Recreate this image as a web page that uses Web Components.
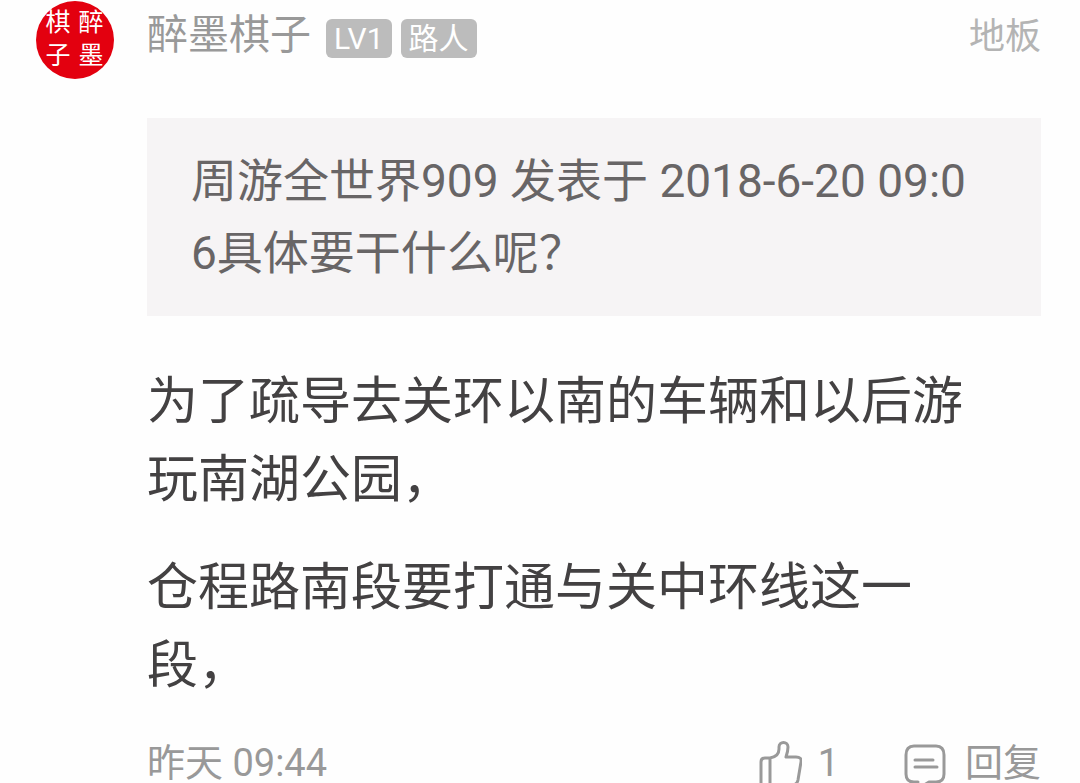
<!DOCTYPE html>
<html lang="zh-CN">
<head>
<meta charset="utf-8">
<meta name="viewport" content="width=device-width, initial-scale=1">
<title>醉墨棋子</title>
<style>
    body {
        margin: 0;
        background: #fefefe;
        font-family: Roboto, "Noto Sans CJK SC", sans-serif;
    }
</style>
</head>
<body>

<forum-post>
    <seal-avatar slot="avatar"></seal-avatar>
    <a slot="name" href="#user">醉墨棋子</a>
    <user-badge slot="badges">LV1</user-badge>
    <user-badge slot="badges">路人</user-badge>
    <span slot="floor">地板</span>
    <post-quote>周游全世界909 发表于 2018-6-20 09:06具体要干什么呢？</post-quote>
    <post-body>
        <p>为了疏导去关环以南的车辆和以后游玩南湖公园，</p>
        <p>仓程路南段要打通与关中环线这一段，</p>
    </post-body>
    <time slot="time">昨天 09:44</time>
    <post-action slot="actions" icon="like">1</post-action>
    <post-action slot="actions" icon="reply">回复</post-action>
</forum-post>

<script>
const ICONS = {
    like: `
        <path d="M14 18v28M14 18H9q-4 0-4 4v24M14 18c6-1 9-4 9-9V7c0-6 9-6 9 0 0 4-1 7-2 10h10q6 0 5 5l-3 18q-1 5-6 5H5"/>`,
    reply: `
        <path d="M15 42h-4q-8 0-8-8V15q0-9 8-9h22q8 0 8 9v19q0 8-8 8h-7l-5 3"/>
        <path d="M12 20h18M12 27h22"/>`
};


class SealAvatar extends HTMLElement {

    constructor() {
        super();
        this.attachShadow({mode: "open"});
    }

    connectedCallback() {
        this.shadowRoot.innerHTML = `
            <style>
                :host {
                    display: block;
                }

                svg {
                    display: block;
                    width: 100%;
                }

                text {
                    fill: #fff;
                    font-size: 25px;
                    text-anchor: middle;
                }
            </style>

            <svg viewBox="0 0 78 78">
                <circle cx="39" cy="39" r="39" fill="#e3000f"/>
                <text x="22" y="30">棋</text>
                <text x="22" y="63">子</text>
                <text x="55" y="30">醉</text>
                <text x="55" y="63">墨</text>
            </svg>
        `;
    }
}


class UserBadge extends HTMLElement {

    constructor() {
        super();
        this.attachShadow({mode: "open"});
    }

    connectedCallback() {
        this.shadowRoot.innerHTML = `
            <style>
                :host {
                    display: block;
                    padding: 0 8px;
                    border-radius: 6px;
                    background: #bcbcbc;
                    color: #fff;
                    font-size: 30px;
                    line-height: 39px;
                }
            </style>

            <slot></slot>
        `;
    }
}


class PostQuote extends HTMLElement {

    constructor() {
        super();
        this.attachShadow({mode: "open"});
    }

    connectedCallback() {
        this.shadowRoot.innerHTML = `
            <style>
                :host {
                    display: block;
                }

                blockquote {
                    margin: 0;
                    padding: 27px 52px 27px 44px;
                    background: #f6f4f5;
                    color: #686566;
                    font-size: 46px;
                    line-height: 72px;
                    word-break: break-all;
                }
            </style>

            <blockquote><slot></slot></blockquote>
        `;
    }
}


class PostBody extends HTMLElement {

    constructor() {
        super();
        this.attachShadow({mode: "open"});
    }

    connectedCallback() {
        this.shadowRoot.innerHTML = `
            <style>
                :host {
                    display: flex;
                    flex-direction: column;
                    gap: 30px;
                    padding-right: 44px;
                    color: #434142;
                    font-size: 51px;
                    line-height: 78px;
                }

                ::slotted(p) {
                    margin: 0;
                }
            </style>

            <slot></slot>
        `;
    }
}


class PostAction extends HTMLElement {

    constructor() {
        super();
        this.attachShadow({mode: "open"});
    }

    connectedCallback() {
        this.shadowRoot.innerHTML = `
            <style>
                :host {
                    display: block;
                }

                button {
                    display: flex;
                    align-items: center;
                    gap: 16px;
                    padding: 0;
                    border: 0;
                    background: none;
                    color: inherit;
                    font: inherit;
                }

                svg {
                    width: 46px;
                    height: 46px;
                    fill: none;
                    stroke: currentColor;
                    stroke-width: 3;
                    stroke-linecap: round;
                    stroke-linejoin: round;
                }
            </style>

            <button type="button">
                <svg viewBox="0 0 46 46" aria-hidden="true">${ICONS[this.getAttribute("icon")]}</svg>
                <slot></slot>
            </button>
        `;
    }
}


class ForumPost extends HTMLElement {

    constructor() {
        super();
        this.attachShadow({mode: "open"});
    }

    connectedCallback() {
        this.shadowRoot.innerHTML = `
            <style>
                :host {
                    display: block;
                }

                article {
                    display: grid;
                    grid-template-columns: 78px 1fr;
                    column-gap: 33px;
                    padding: 1px 39px 0 36px;
                }

                header,
                footer {
                    display: flex;
                    color: #999;
                }

                header {
                    align-items: baseline;
                    gap: 9px;
                    height: 72px;
                    margin-bottom: 45px;
                }

                footer {
                    align-items: center;
                    gap: 64px;
                    height: 46px;
                    margin-top: 35px;
                    font-size: 38px;
                    line-height: 46px;
                }

                .main {
                    display: flex;
                    flex-direction: column;
                }

                .content {
                    display: flex;
                    flex-direction: column;
                    gap: 47px;
                }

                ::slotted(a) {
                    margin-right: 6px;
                    color: #999;
                    font-size: 41px;
                    text-decoration: none;
                }

                ::slotted(span) {
                    margin-left: auto;
                    color: #b4b4b4;
                    font-size: 36px;
                }

                ::slotted(time) {
                    margin-right: auto;
                }
            </style>

            <article>
                <slot name="avatar"></slot>
                <div class="main">
                    <header>
                        <slot name="name"></slot>
                        <slot name="badges"></slot>
                        <slot name="floor"></slot>
                    </header>
                    <div class="content"><slot></slot></div>
                    <footer>
                        <slot name="time"></slot>
                        <slot name="actions"></slot>
                    </footer>
                </div>
            </article>
        `;
    }
}


customElements.define("seal-avatar", SealAvatar);
customElements.define("user-badge", UserBadge);
customElements.define("post-quote", PostQuote);
customElements.define("post-body", PostBody);
customElements.define("post-action", PostAction);
customElements.define("forum-post", ForumPost);
</script>
</body>
</html>
